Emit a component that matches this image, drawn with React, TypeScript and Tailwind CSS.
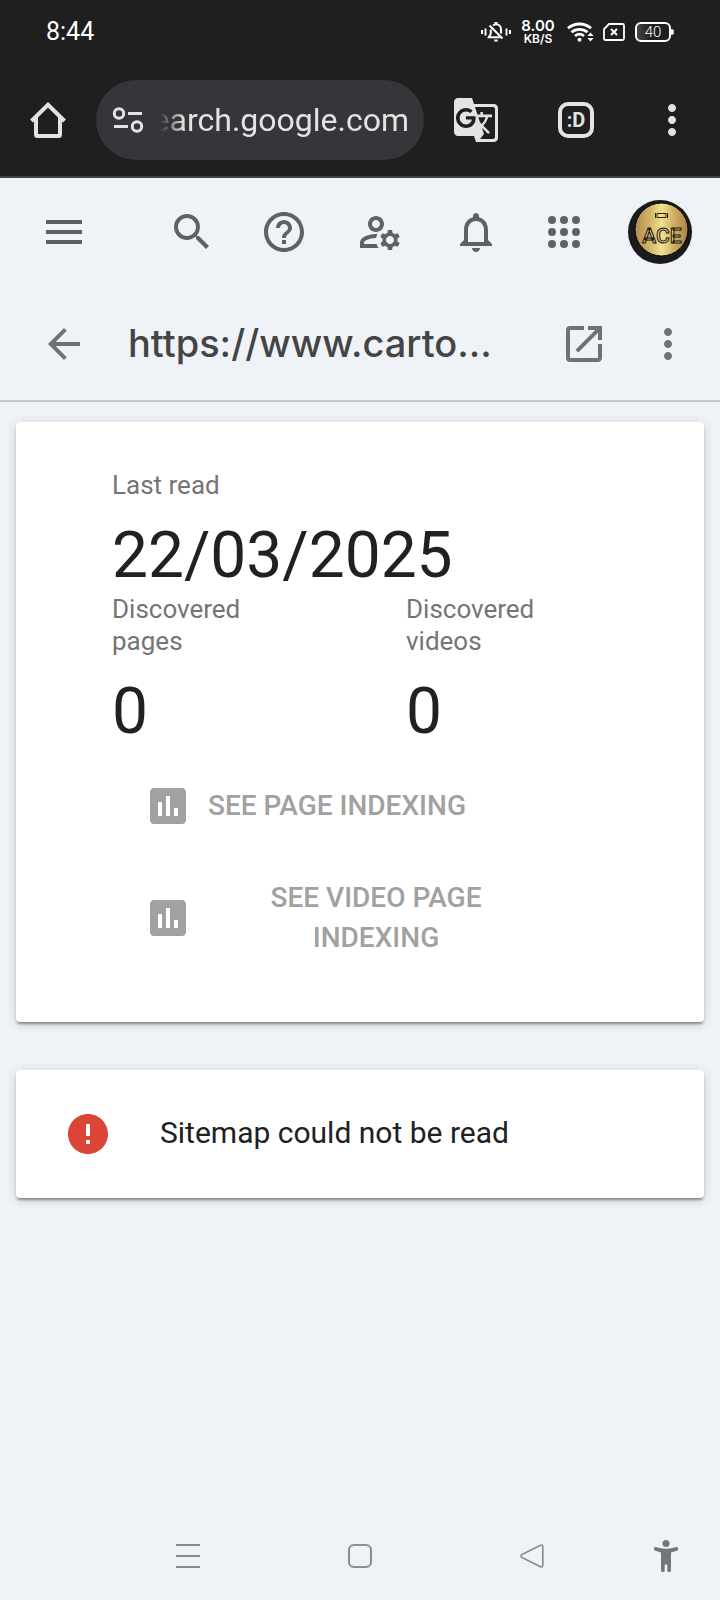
import type { ReactNode } from "react";
import {
  MdArrowBack,
  MdAssessment,
  MdError,
  MdGTranslate,
  MdHelpOutline,
  MdMenu,
  MdMoreVert,
  MdNotificationsNone,
  MdOpenInNew,
  MdOutlineManageAccounts,
  MdSearch,
} from "react-icons/md";

type IconButtonProps = {
  label: string;
  className?: string;
  children: ReactNode;
};

function IconButton({ label, className = "", children }: IconButtonProps) {
  return (
    <button
      type="button"
      aria-label={label}
      className={`flex size-12 flex-none items-center justify-center text-5xl ${className}`}
    >
      {children}
    </button>
  );
}

function StatusBar() {
  return (
    <div className="flex h-16 items-center px-[46px] text-white">
      <span className="text-[25px] leading-8">8:44</span>

      {/* Muted bell with vibration marks */}
      <svg className="ml-auto h-5 w-[30px]" viewBox="0 0 30 20" fill="none" stroke="currentColor">
        <path d="M1 8v4M29 8v4" strokeWidth="2" />
        <path d="M4.500 6.500v7M25.500 6.500v7" strokeWidth="2" />
        <path
          d="M12 3.500c1-.9 1.900-1.300 3-1.300 3 0 5 2.200 5 5.300v4M9.800 7.500v4.300l-2 3.400h12.700M8.500 3.500l13 13"
          strokeWidth="2"
        />
        <path d="M13.500 1h3M13.300 18.500h3.400" strokeWidth="2" />
      </svg>

      <div className="ml-[10px] flex w-[34px] flex-none flex-col items-center font-[Inter,sans-serif] font-semibold">
        <span className="text-[15px] leading-[14px]">8.00</span>
        <span className="text-[12px] leading-[12px]">KB/S</span>
      </div>

      <svg className="ml-3 h-5 w-7" viewBox="0 0 28 20" fill="none" stroke="currentColor">
        <path d="M1 6.200c6.500-5.600 16.500-5.600 23 0" strokeWidth="2.800" />
        <path d="M4.500 10.200c4.600-3.900 11.400-3.900 16 0" strokeWidth="2.800" />
        <path d="M8 14c2.700-2.200 6.300-2.200 9 0" strokeWidth="2.800" />
        <circle cx="12.500" cy="17.800" r="2" fill="currentColor" stroke="none" />
        <path d="M20.400 14l3.100-3.600 3.100 3.600zM20.400 16l3.100 3.600 3.100-3.600z" fill="currentColor" stroke="none" />
      </svg>

      <svg className="ml-2 h-5 w-[22px]" viewBox="0 0 22 20" fill="none" stroke="currentColor">
        <path d="M6 2h13.500a1.500 1.500 0 0 1 1.500 1.500v13a1.500 1.500 0 0 1-1.500 1.500h-17A1.500 1.500 0 0 1 1 16.500V7z" strokeWidth="1.800" />
        <path d="M8 7l6 6M14 7l-6 6" strokeWidth="2" />
      </svg>

      <div className="ml-[10px] flex items-center">
        <span className="flex h-5 w-9 items-center justify-center rounded-md border-2 border-white bg-gradient-to-r from-[#454545] to-[#1f1f1f] to-45% text-[15px] leading-4 font-light">
          40
        </span>
        <span className="h-[6px] w-[3px] rounded-r-sm bg-white" />
      </div>
    </div>
  );
}

function BrowserBar() {
  return (
    <div className="flex items-center border-b-2 border-[#444444] px-6 py-4 text-[#e3e3e3]">
      <IconButton label="Home">
        <svg className="size-9" viewBox="0 0 36 36" fill="none" stroke="currentColor" strokeWidth="4">
          <path d="M1.500 19L18 2.800 34.500 19" />
          <path d="M6 15v17.500a1.500 1.500 0 0 0 1.500 1.500h21a1.500 1.500 0 0 0 1.500-1.500V15" />
        </svg>
      </IconButton>

      <button
        type="button"
        className="ml-6 flex h-20 min-w-0 flex-1 items-center rounded-full bg-[#35363a] pr-[15px] pl-4"
      >
        <svg className="h-7 w-8 flex-none" viewBox="0 0 32 28" fill="none" stroke="currentColor" strokeWidth="3">
          <circle cx="7" cy="7.500" r="4.700" />
          <path d="M16 7.500h14M2 20.500h14" />
          <circle cx="25" cy="20.500" r="4.700" />
        </svg>
        <span className="ml-4 flex min-w-0 flex-1 justify-end overflow-hidden text-[32px] leading-10 whitespace-nowrap [mask-image:linear-gradient(to_right,transparent,black_24px)]">
          search.google.com
        </span>
      </button>

      <IconButton label="Translate" className="ml-7">
        <MdGTranslate />
      </IconButton>
      <IconButton label="Open tabs" className="ml-[52px]">
        <span className="flex size-9 items-center justify-center rounded-[10px] border-4 border-[#e3e3e3] text-[20px] leading-5 font-bold">
          :D
        </span>
      </IconButton>
      <IconButton label="Browser menu" className="ml-12">
        <MdMoreVert />
      </IconButton>
    </div>
  );
}

function AppsIcon() {
  return (
    <svg className="size-8" viewBox="0 0 32 32" fill="currentColor">
      {[4, 16, 28].map((y) =>
        [4, 16, 28].map((x) => <circle key={`${x}-${y}`} cx={x} cy={y} r="4" />)
      )}
    </svg>
  );
}

function Avatar() {
  return (
    <svg className="size-16" viewBox="0 0 64 64">
      <defs>
        <linearGradient id="gold" x1="0" x2="1">
          <stop offset="0" stopColor="#b58b4e" />
          <stop offset="0.250" stopColor="#cfae64" />
          <stop offset="0.500" stopColor="#efe290" />
          <stop offset="0.750" stopColor="#cdab62" />
          <stop offset="1" stopColor="#ad8146" />
        </linearGradient>
      </defs>
      <circle cx="32" cy="32" r="32" fill="#1b1a1c" />
      <circle cx="33.500" cy="29.500" r="26.500" fill="url(#gold)" stroke="#050505" />
      <path d="M29 13.500h9v4h-9zM27.500 13v5M39.500 13v5" fill="none" stroke="#2a2008" />
      <text
        x="34"
        y="43"
        textAnchor="middle"
        className="font-[Roboto,sans-serif] text-[21px] font-medium"
        fill="#e6d27e"
        stroke="#111111"
      >
        ACE
      </text>
    </svg>
  );
}

function AppBar() {
  return (
    <div className="flex h-[108px] items-center pr-7 pl-10 text-[#5f6166]">
      <IconButton label="Main menu">
        <MdMenu />
      </IconButton>
      <IconButton label="Search" className="ml-auto">
        <MdSearch />
      </IconButton>
      <IconButton label="Help" className="ml-11">
        <MdHelpOutline />
      </IconButton>
      <IconButton label="Manage users" className="ml-12">
        <MdOutlineManageAccounts />
      </IconButton>
      <IconButton label="Notifications" className="ml-12">
        <MdNotificationsNone />
      </IconButton>
      <IconButton label="Google apps" className="ml-10">
        <AppsIcon />
      </IconButton>
      <button type="button" aria-label="Account" className="ml-10 flex-none">
        <Avatar />
      </button>
    </div>
  );
}

function TitleBar() {
  return (
    <div className="flex h-[116px] items-center border-b-2 border-[#c4c6c9] pt-[2px] pr-7 pl-10 text-[#707173]">
      <IconButton label="Back">
        <MdArrowBack />
      </IconButton>
      <h1 className="ml-10 min-w-0 flex-1 truncate pb-[2px] font-[Inter,sans-serif] text-[38px] leading-[48px] font-medium text-[#444444]">
        https://www.carto...
      </h1>
      <IconButton label="Open in new tab">
        <MdOpenInNew />
      </IconButton>
      <IconButton label="More options" className="ml-9">
        <MdMoreVert />
      </IconButton>
    </div>
  );
}

type StatProps = {
  label: string;
  value: string;
};

function Stat({ label, value }: StatProps) {
  return (
    <div>
      <dt className="w-40 text-[26px] leading-8 text-[#757575]">{label}</dt>
      <dd className="mt-[18px] text-[64px] leading-[74px] text-[#212121]">{value}</dd>
    </div>
  );
}

function IndexingButton({ children, className = "" }: { children: ReactNode; className?: string }) {
  return (
    <button
      type="button"
      disabled
      className={`flex items-center gap-4 px-8 py-4 text-[28px] leading-10 font-medium text-[#a1a1a1] uppercase ${className}`}
    >
      <MdAssessment className="flex-none text-5xl" />
      <span className="flex-1">{children}</span>
    </button>
  );
}

const CARD = "rounded bg-white shadow-[0_3px_3px_-1px_rgba(0,0,0,0.4),0_2px_12px_rgba(0,0,0,0.16)]";

export default function App() {
  return (
    <div className="flex min-h-screen flex-col bg-[#eff3f8] font-[Roboto,sans-serif]">
      <header className="bg-[#1f1f1f]">
        <StatusBar />
        <BrowserBar />
      </header>

      <AppBar />
      <TitleBar />

      <main className="flex flex-1 flex-col gap-12 px-4 pt-5">
        <section className={`${CARD} pt-[47px] pr-1 pb-12 pl-24`}>
          <dl className="grid grid-cols-2">
            <div className="col-span-2">
              <Stat label="Last read" value="22/03/2025" />
            </div>
            <Stat label="Discovered pages" value="0" />
            <Stat label="Discovered videos" value="0" />
          </dl>
          <div className="mt-[17px] flex max-w-[464px] flex-col items-start gap-4">
            <IndexingButton>See page indexing</IndexingButton>
            <IndexingButton className="w-full">See video page indexing</IndexingButton>
          </div>
        </section>

        <section className={`${CARD} flex items-center gap-12 px-12 py-10`}>
          <MdError className="flex-none text-5xl text-[#db4437]" />
          <p className="pb-[2px] text-[30px] leading-10 text-[#212121]">Sitemap could not be read</p>
        </section>
      </main>

      <nav aria-label="System" className="flex h-[88px] items-center pr-[6px] pl-[102px] text-[#8a8c8f]">
        <button type="button" aria-label="Recent apps" className="flex flex-1 justify-center">
          <svg className="size-6" viewBox="0 0 24 24" stroke="currentColor" strokeWidth="2">
            <path d="M0 1h24M0 12h24M0 23h24" />
          </svg>
        </button>
        <button type="button" aria-label="Home screen" className="flex flex-1 justify-center">
          <span className="size-6 rounded-md border-2 border-[#8a8c8f]" />
        </button>
        <button type="button" aria-label="Previous screen" className="flex flex-1 justify-center">
          <svg className="size-6" viewBox="0 0 24 24" fill="none" stroke="currentColor" strokeWidth="1.700">
            <path d="M20.500 1.300L2 10.500a1.700 1.700 0 0 0 0 3l18.500 9.200c1.100.5 2.300-.2 2.300-1.400V2.700c0-1.200-1.200-1.900-2.300-1.400z" />
          </svg>
        </button>
        <button
          type="button"
          aria-label="Accessibility"
          className="flex w-24 flex-none justify-center text-[#757678]"
        >
          <svg className="h-8 w-6" viewBox="0 0 24 32" fill="currentColor">
            <circle cx="12" cy="3.500" r="3.500" />
            <path d="M1.500 7Q12 10.500 22.500 7a1 1 0 0 1 1.300.8l.2 1.700a1 1 0 0 1-.7 1.100L17 12.500V30.500a1.500 1.500 0 0 1-1.500 1.500h-1a1.200 1.200 0 0 1-1.200-1.200V24.500h-2.600v6.300a1.200 1.200 0 0 1-1.200 1.200h-1A1.500 1.500 0 0 1 7 30.500V12.500L.7 10.600A1 1 0 0 1 0 9.500l.2-1.700A1 1 0 0 1 1.500 7z" />
          </svg>
        </button>
      </nav>
    </div>
  );
}
